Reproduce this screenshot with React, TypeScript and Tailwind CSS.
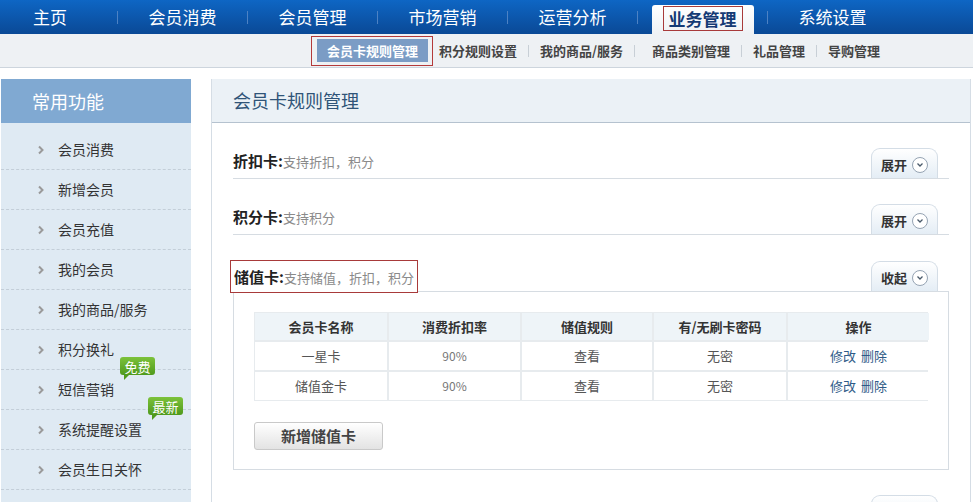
import React from "react";

const font = { fontFamily: '"Noto Sans CJK SC", "Noto Sans", sans-serif' };

const topMenu = ["会员消费", "会员管理", "市场营销", "运营分析", "业务管理", "系统设置"];
const subMenu = ["积分规则设置", "我的商品/服务", "商品类别管理", "礼品管理", "导购管理"];

const sideItems: { name: string; badge?: string }[] = [
  { name: "会员消费" },
  { name: "新增会员" },
  { name: "会员充值" },
  { name: "我的会员" },
  { name: "我的商品/服务" },
  { name: "积分换礼" },
  { name: "短信营销", badge: "免费" },
  { name: "系统提醒设置", badge: "最新" },
  { name: "会员生日关怀" },
];

const rows = [
  { name: "一星卡", rate: "90%", rule: "查看", pwd: "无密" },
  { name: "储值金卡", rate: "90%", rule: "查看", pwd: "无密" },
];

const Chevron = () => (
  <svg width="8" height="10" viewBox="0 0 8 10" className="shrink-0">
    <path d="M2 1.5 L5.5 5 L2 8.5" fill="none" stroke="#9a9a9a" strokeWidth="2" />
  </svg>
);

const ToggleButton = ({ label }: { label: string }) => (
  <div className="mr-[11px] flex h-[30px] w-[67px] items-center justify-center gap-[5px] rounded-t-[9px] border border-b-0 border-[#d4dde6] bg-gradient-to-b from-white to-[#e4edf5] pt-[2px]">
    {label && <span className="text-[13px] font-bold text-[#333]">{label}</span>}
    <span className="flex h-[16px] w-[16px] items-center justify-center rounded-full border border-[#95a3b3] bg-white">
      <svg width="8" height="6" viewBox="0 0 8 6">
        <path d="M1.5 1.5 L4 4 L6.5 1.5" fill="none" stroke="#4a5a6a" strokeWidth="1.3" />
      </svg>
    </span>
  </div>
);

const Section = ({ title, desc, label }: { title: string; desc: string; label: string }) => (
  <div className="mt-[26px] flex h-[30px] items-end justify-between border-b border-[#d6dce2]">
    <div className="pb-[6px]">
      <span className="text-[15px] font-bold text-[#222]">{title}</span>
      <span className="text-[13px] text-[#8a8a8a]">{desc}</span>
    </div>
    <ToggleButton label={label} />
  </div>
);

const App = () => {
  return (
    <div className="h-[502px] w-[973px] overflow-hidden bg-white" style={font}>
      {/* top nav */}
      <div className="flex h-[34px] items-end bg-gradient-to-b from-[#0e66c4] to-[#0a4996] text-[17px] text-white">
        <div className="flex h-[34px] w-[117px] items-center">
          <span className="w-[100px] text-center">主页</span>
        </div>
        {topMenu.map((m) => (
          <React.Fragment key={m}>
            <span className="h-[13px] w-px self-center bg-[#4d82c4]" />
            <div className="flex h-[34px] w-[129px] items-end justify-center">
              {m === "业务管理" ? (
                <div className="flex h-[29px] w-[102px] items-start justify-center rounded-t-[3px] bg-gradient-to-b from-white to-[#eef1f4] pt-px">
                  <span className="flex h-[25px] w-[80px] items-center justify-center border border-[#a83a3a] font-bold text-[#143a74]">
                    {m}
                  </span>
                </div>
              ) : (
                <span className="flex h-[34px] items-center">{m}</span>
              )}
            </div>
          </React.Fragment>
        ))}
      </div>

      {/* sub nav */}
      <div className="flex h-[34px] items-center border-b border-[#cdd5dd] bg-[#eef1f4] pl-[311px] text-[13px] font-bold text-[#444]">
        <div className="flex h-[30px] w-[122px] items-center border border-[#b43a3a] pl-[5px]">
          <span className="flex h-[23px] w-[111px] items-center justify-center bg-[#7b9cc5] text-white">
            会员卡规则管理
          </span>
        </div>
        <div className="ml-[6px] flex items-center gap-[11px]">
          {subMenu.map((s, i) => (
            <React.Fragment key={s}>
              <span className={i === 2 ? "ml-[6px]" : ""}>{s}</span>
              {i < subMenu.length - 1 && <span className="h-[12px] w-px bg-[#c8cfd6]" />}
            </React.Fragment>
          ))}
        </div>
      </div>

      <div className="mt-[11px] flex">
        {/* sidebar */}
        <div className="ml-px w-[190px] shrink-0">
          <div className="flex h-[44px] items-center bg-[#80a9d2] pl-[31px] text-[18px] text-white">常用功能</div>
          <div className="bg-[#dfeaf3] pt-[7px]">
            {sideItems.map((it) => (
              <div
                key={it.name}
                className="flex h-[40px] items-center gap-[13px] border-b border-dashed border-[#c3ced8] pl-[36px] text-[14px] text-[#333]"
              >
                <Chevron />
                <span className="relative">
                  {it.name}
                  {it.badge && (
                    <span className="absolute top-[-22px] left-full ml-[6px] flex h-[18px] w-[35px] items-center justify-center rounded-[3px] bg-gradient-to-b from-[#7cc23a] to-[#4f9a1c] text-[13px] leading-none text-white">
                      {it.badge}
                      <span className="absolute bottom-[-5px] left-[4px] h-0 w-0 border-t-[6px] border-r-[6px] border-t-[#4f9a1c] border-r-transparent" />
                    </span>
                  )}
                </span>
              </div>
            ))}
            <div className="h-[40px]" />
          </div>
        </div>

        {/* main panel */}
        <div className="ml-[20px] h-[500px] w-[760px] border-r border-l border-[#d5dde5]">
          <div className="flex h-[44px] items-center border-b border-[#b5c2cf] bg-[#ebf1f6] pl-[21px] text-[18px] text-[#2f5478]">
            会员卡规则管理
          </div>
          <div className="px-[21px]">
            <Section title="折扣卡:" desc="支持折扣，积分" label="展开" />
            <Section title="积分卡:" desc="支持积分" label="展开" />

            <div className="mt-[26px] flex h-[30px] items-end justify-between">
              <div className="relative z-10 -mb-[2px] -ml-[3px] flex h-[33px] items-center border border-[#a83a3a] bg-white px-[3px] pt-[2px]">
                <span className="text-[15px] font-bold text-[#222]">储值卡:</span>
                <span className="text-[13px] text-[#8a8a8a]">支持储值，折扣，积分</span>
              </div>
              <ToggleButton label="收起" />
            </div>
            <div className="border border-[#d6dce2] px-[20px] pt-[20px] pb-[19px]">
              <div className="grid grid-cols-[132px_131px_130px_132px_141px] gap-[2px] bg-[#e7ebee] p-px text-center text-[13px]">
                {["会员卡名称", "消费折扣率", "储值规则", "有/无刷卡密码", "操作"].map((h) => (
                  <div key={h} className="flex h-[27px] items-center justify-center bg-[#eef4f8] font-bold text-[#333]">
                    {h}
                  </div>
                ))}
                {rows.map((r) => (
                  <React.Fragment key={r.name}>
                    <div className="flex h-[28px] items-center justify-center bg-white text-[#555]">{r.name}</div>
                    <div className="flex h-[28px] items-center justify-center bg-white text-[12px] text-[#777]">{r.rate}</div>
                    <div className="flex h-[28px] items-center justify-center bg-white text-[#555]">{r.rule}</div>
                    <div className="flex h-[28px] items-center justify-center bg-white text-[#555]">{r.pwd}</div>
                    <div className="flex h-[28px] items-center justify-center gap-[5px] bg-white text-[#2e5a87]">
                      <span>修改</span>
                      <span>删除</span>
                    </div>
                  </React.Fragment>
                ))}
              </div>
              <button className="mt-[21px] flex h-[28px] w-[129px] items-center justify-center rounded-[3px] border border-[#c9c9c9] bg-gradient-to-b from-white to-[#e3e3e3] text-[15px] font-bold text-[#444]">
                新增储值卡
              </button>
            </div>

            <div className="mt-[26px] flex h-[30px] items-end justify-end border-b border-[#d6dce2]">
              <ToggleButton label="" />
            </div>
          </div>
        </div>
      </div>
    </div>
  );
};

export default App;
